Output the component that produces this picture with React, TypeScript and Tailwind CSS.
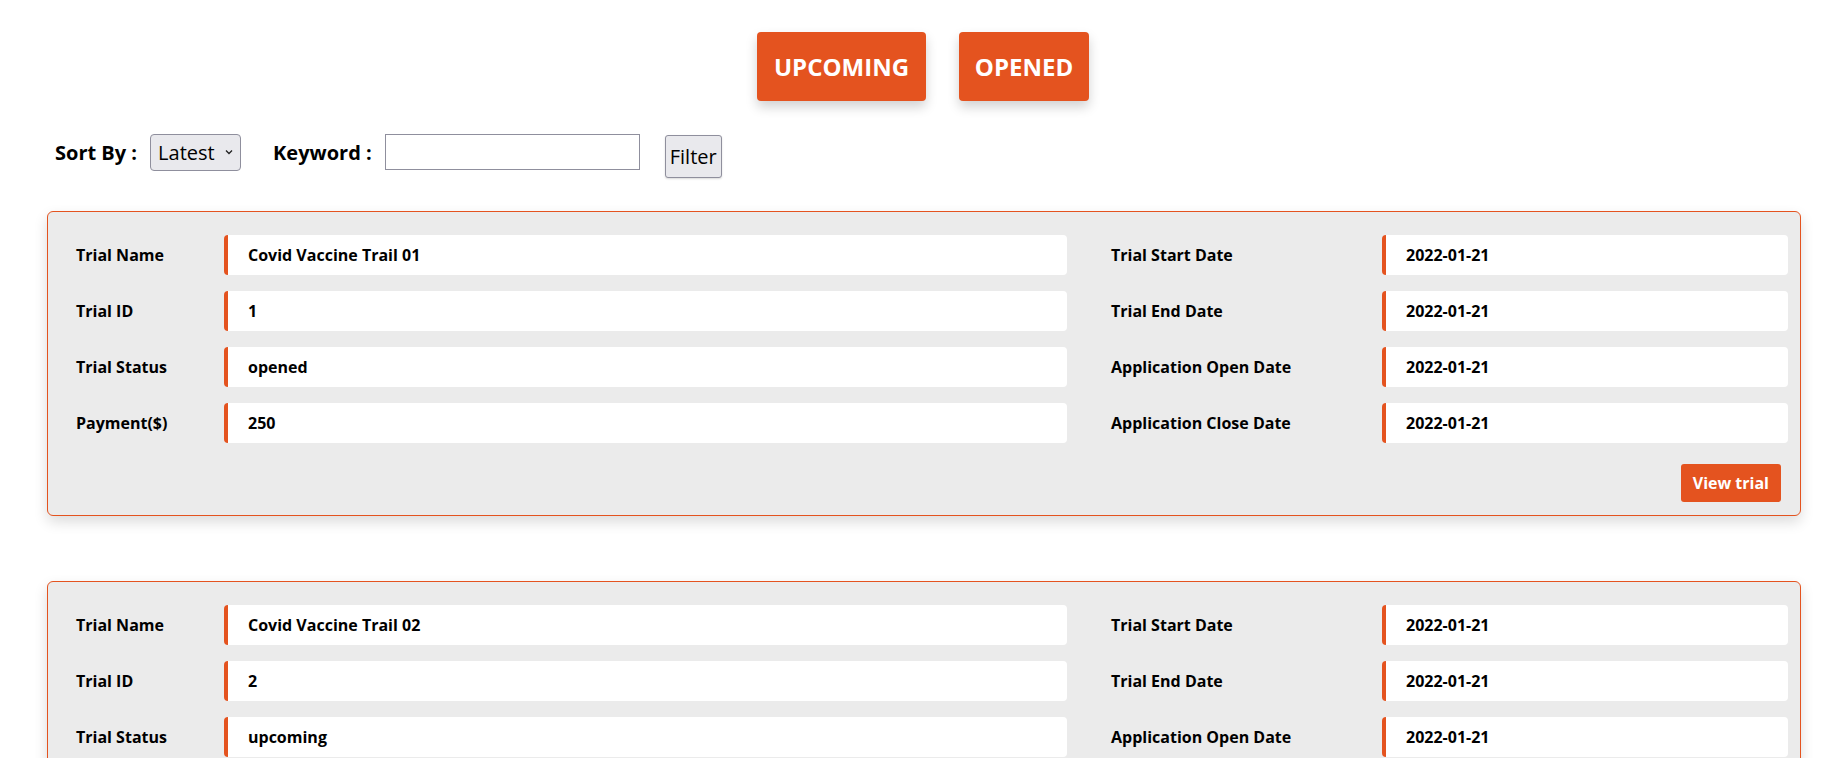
import { useState } from "react";

const trials = [
  { name: "Covid Vaccine Trail 01", id: "1", status: "opened", payment: "250" },
  { name: "Covid Vaccine Trail 02", id: "2", status: "upcoming", payment: "250" },
];

function Field({ label, value }: { label: string; value: string }) {
  return (
    <>
      <div className="flex items-center text-[16px] font-bold text-black">{label}</div>
      <div className="flex h-10 items-center rounded-[4px] border-l-4 border-[#e4531f] bg-white pl-5 text-[16px] font-bold text-black">
        {value}
      </div>
    </>
  );
}

function TrialCard({ t }: { t: (typeof trials)[number] }) {
  const date = "2022-01-21";
  return (
    <div className="rounded-[6px] border border-[#e4531f] bg-[#ebebeb] pt-[23px] pb-[13px] pl-[28px] pr-[12px] shadow-[0_6px_14px_rgba(0,0,0,0.14)]">
      <div className="grid grid-cols-[148px_minmax(0,1fr)_315px_406px] gap-y-4">
        <Field label="Trial Name" value={t.name} />
        <div className="flex items-center pl-[44px] text-[16px] font-bold">Trial Start Date</div>
        <div className="flex h-10 items-center rounded-[4px] border-l-4 border-[#e4531f] bg-white pl-5 text-[16px] font-bold">{date}</div>

        <Field label="Trial ID" value={t.id} />
        <div className="flex items-center pl-[44px] text-[16px] font-bold">Trial End Date</div>
        <div className="flex h-10 items-center rounded-[4px] border-l-4 border-[#e4531f] bg-white pl-5 text-[16px] font-bold">{date}</div>

        <Field label="Trial Status" value={t.status} />
        <div className="flex items-center pl-[44px] text-[16px] font-bold">Application Open Date</div>
        <div className="flex h-10 items-center rounded-[4px] border-l-4 border-[#e4531f] bg-white pl-5 text-[16px] font-bold">{date}</div>

        <Field label="Payment($)" value={t.payment} />
        <div className="flex items-center pl-[44px] text-[16px] font-bold">Application Close Date</div>
        <div className="flex h-10 items-center rounded-[4px] border-l-4 border-[#e4531f] bg-white pl-5 text-[16px] font-bold">{date}</div>
      </div>
      <div className="mt-[21px] flex justify-end pr-[7px]">
        <button className="h-[38px] rounded-[3px] bg-[#e4531f] px-3 text-[16px] font-bold text-white">View trial</button>
      </div>
    </div>
  );
}

export default function App() {
  const [sort, setSort] = useState("latest");
  const [keyword, setKeyword] = useState("");

  return (
    <div className="min-h-screen bg-white pb-10 text-black" style={{ fontFamily: "'Open Sans', 'Noto Sans', sans-serif" }}>
      {/* TABS */}
      <div className="flex justify-center gap-[33px] pt-[32px]">
        <button className="h-[69px] w-[169px] rounded-[4px] bg-[#e4531f] text-[24px] font-bold text-white shadow-[0_6px_12px_rgba(0,0,0,0.18)]">
          UPCOMING
        </button>
        <button className="h-[69px] w-[130px] rounded-[4px] bg-[#e4531f] text-[24px] font-bold text-white shadow-[0_6px_12px_rgba(0,0,0,0.18)]">
          OPENED
        </button>
      </div>

      {/* FILTERS */}
      <div className="mt-[33px] flex items-start pl-[55px]">
        <div className="flex h-[37px] items-center text-[20px] font-bold">Sort By :</div>
        <div className="relative ml-[13px]">
          <select
            value={sort}
            onChange={(e) => setSort(e.target.value)}
            className="h-[37px] w-[91px] appearance-none rounded-[4px] border border-[#8f8f9d] bg-[#e9e9ed] pl-[7px] text-[20px]"
          >
            <option value="latest">Latest</option>
            <option value="oldest">Oldest</option>
          </select>
          <svg className="pointer-events-none absolute right-[8px] top-[15px]" width="8" height="6" viewBox="0 0 8 6">
            <path d="M1 1.5 L4 4.5 L7 1.5" fill="none" stroke="#222" strokeWidth="1.3" />
          </svg>
        </div>
        <div className="ml-[32px] flex h-[37px] items-center text-[20px] font-bold">Keyword :</div>
        <input
          value={keyword}
          onChange={(e) => setKeyword(e.target.value)}
          className="ml-[13px] h-[36px] w-[255px] border border-[#8f8f9d] bg-white px-2 text-[20px]"
        />
        <button className="ml-[25px] mt-[1px] h-[43px] w-[57px] rounded-[3px] border border-[#8f8f9d] bg-[#e9e9ed] text-[20px] shadow-[0_1px_2px_rgba(0,0,0,0.15)]">
          Filter
        </button>
      </div>

      {/* TRIALS */}
      <div className="mt-[33px] flex flex-col gap-[65px] pl-[47px] pr-[45px]">
        {trials.map((t) => (
          <TrialCard key={t.id} t={t} />
        ))}
      </div>
    </div>
  );
}
